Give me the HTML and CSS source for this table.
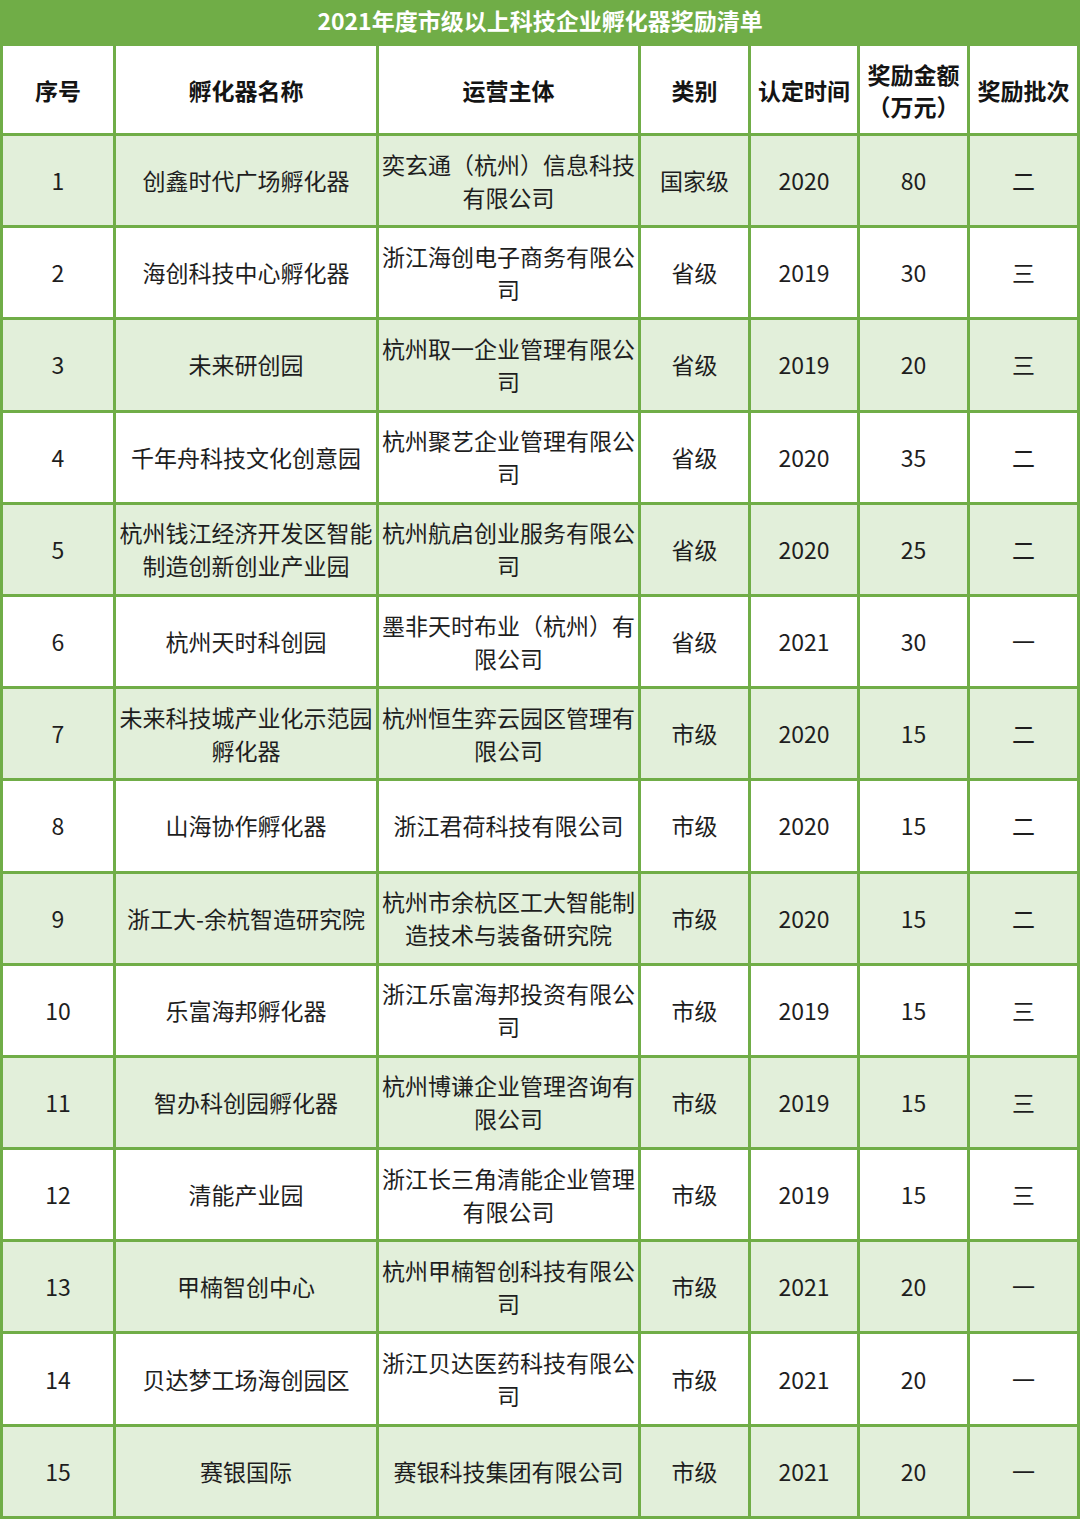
FILE: index.html
```html
<!DOCTYPE html>
<html lang="zh-CN">
<head>
<meta charset="utf-8">
<title>2021年度市级以上科技企业孵化器奖励清单</title>
<link rel="stylesheet" href="styles.css">
</head>
<body>
<table class="award-table">
  <colgroup>
    <col class="c-no"><col class="c-name"><col class="c-org"><col class="c-level"><col class="c-year"><col class="c-amount"><col class="c-batch">
  </colgroup>
  <thead>
    <tr class="title-row"><th colspan="7">2021年度市级以上科技企业孵化器奖励清单</th></tr>
    <tr class="head-row">
      <th>序号</th><th>孵化器名称</th><th>运营主体</th><th>类别</th><th>认定时间</th><th>奖励金额<br>（万元）</th><th>奖励批次</th>
    </tr>
  </thead>
  <tbody>
    <tr class="odd"><td>1</td><td>创鑫时代广场孵化器</td><td>奕玄通（杭州）信息科技有限公司</td><td>国家级</td><td>2020</td><td>80</td><td>二</td></tr>
    <tr><td>2</td><td>海创科技中心孵化器</td><td>浙江海创电子商务有限公司</td><td>省级</td><td>2019</td><td>30</td><td>三</td></tr>
    <tr class="odd"><td>3</td><td>未来研创园</td><td>杭州取一企业管理有限公司</td><td>省级</td><td>2019</td><td>20</td><td>三</td></tr>
    <tr><td>4</td><td>千年舟科技文化创意园</td><td>杭州聚艺企业管理有限公司</td><td>省级</td><td>2020</td><td>35</td><td>二</td></tr>
    <tr class="odd"><td>5</td><td>杭州钱江经济开发区智能制造创新创业产业园</td><td>杭州航启创业服务有限公司</td><td>省级</td><td>2020</td><td>25</td><td>二</td></tr>
    <tr><td>6</td><td>杭州天时科创园</td><td>墨非天时布业（杭州）有限公司</td><td>省级</td><td>2021</td><td>30</td><td>一</td></tr>
    <tr class="odd"><td>7</td><td>未来科技城产业化示范园孵化器</td><td>杭州恒生弈云园区管理有限公司</td><td>市级</td><td>2020</td><td>15</td><td>二</td></tr>
    <tr><td>8</td><td>山海协作孵化器</td><td>浙江君荷科技有限公司</td><td>市级</td><td>2020</td><td>15</td><td>二</td></tr>
    <tr class="odd"><td>9</td><td>浙工大-余杭智造研究院</td><td>杭州市余杭区工大智能制造技术与装备研究院</td><td>市级</td><td>2020</td><td>15</td><td>二</td></tr>
    <tr><td>10</td><td>乐富海邦孵化器</td><td>浙江乐富海邦投资有限公司</td><td>市级</td><td>2019</td><td>15</td><td>三</td></tr>
    <tr class="odd"><td>11</td><td>智办科创园孵化器</td><td>杭州博谦企业管理咨询有限公司</td><td>市级</td><td>2019</td><td>15</td><td>三</td></tr>
    <tr><td>12</td><td>清能产业园</td><td>浙江长三角清能企业管理有限公司</td><td>市级</td><td>2019</td><td>15</td><td>三</td></tr>
    <tr class="odd"><td>13</td><td>甲楠智创中心</td><td>杭州甲楠智创科技有限公司</td><td>市级</td><td>2021</td><td>20</td><td>一</td></tr>
    <tr><td>14</td><td>贝达梦工场海创园区</td><td>浙江贝达医药科技有限公司</td><td>市级</td><td>2021</td><td>20</td><td>一</td></tr>
    <tr class="odd"><td>15</td><td>赛银国际</td><td>赛银科技集团有限公司</td><td>市级</td><td>2021</td><td>20</td><td>一</td></tr>
  </tbody>
</table>
</body>
</html>
```

FILE: styles.css
```css
html, body {
  margin: 0;
  padding: 0;
  background: #ffffff;
}

.award-table {
  width: 1080px;
  table-layout: fixed;
  border-collapse: separate;
  border-spacing: 3px;
  background: #70ad47;
  font-family: "Noto Sans CJK SC", "Noto Sans", sans-serif;
  color: #1e1e1e;
  font-size: 23px;
}

.c-no { width: 110px; }
.c-name { width: 260px; }
.c-org { width: 259px; }
.c-level { width: 107px; }
.c-year { width: 106px; }
.c-amount { width: 107px; }
.c-batch { width: 107px; }

.award-table th,
.award-table td {
  padding: 0 2px;
  text-align: center;
  vertical-align: middle;
  line-height: 33px;
  background: #ffffff;
  overflow: hidden;
}

.award-table .title-row th {
  height: 40px;
  padding: 0;
  background: #70ad47;
  color: #ffffff;
  font-weight: 700;
  font-size: 23px;
  line-height: 34px;
  vertical-align: top;
}

.head-row th {
  height: 87px;
  font-weight: 700;
  line-height: 32px;
  color: #141414;
}

tbody tr {
  height: 89.2px;
}

tbody tr td {
  height: 89.2px;
}

tbody tr.odd td {
  background: #e2efda;
}
```
